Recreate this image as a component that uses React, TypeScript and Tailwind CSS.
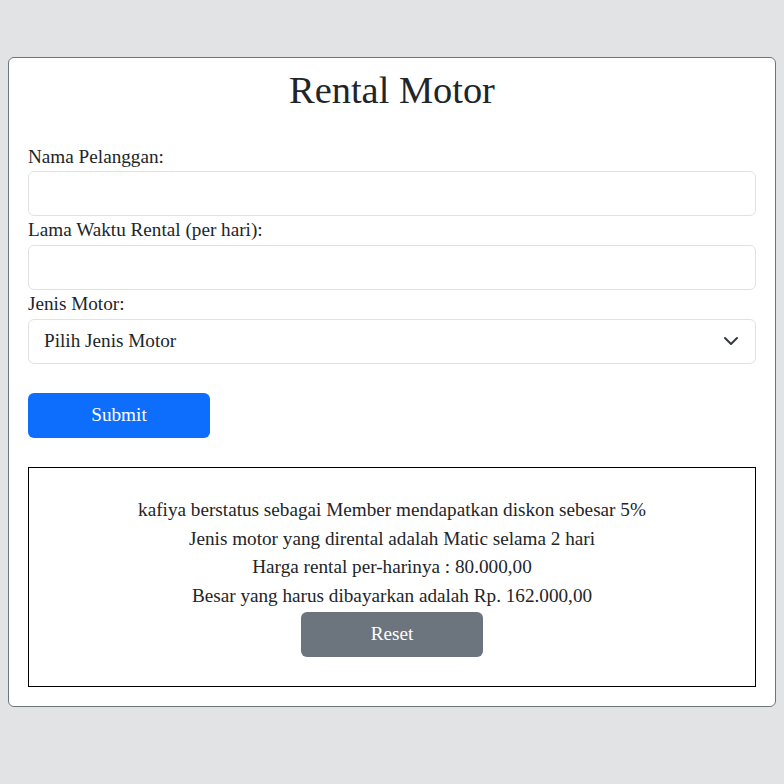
const serif = { fontFamily: '"Liberation Serif", "Times New Roman", serif' };

function Field({ label }: { label: string }) {
  return (
    <div>
      <label className="block text-[19.2px] leading-[28.8px] text-[#212529]">{label}</label>
      <input
        type="text"
        className="block h-[45px] w-full rounded-[6px] border border-[#dee2e6] bg-white px-4 text-[19.2px] outline-none"
      />
    </div>
  );
}

export default function App() {
  return (
    <div className="min-h-[784px] bg-[#e2e3e5] px-2 pt-[57px] pb-8" style={serif}>
      <div className="rounded-[6px] border border-[#6c757d] bg-white px-[19px] pt-[9px] pb-[19px]">
        <h1 className="text-center text-[38.4px] leading-[46px] text-[#212529]">Rental Motor</h1>

        <form className="mt-[29.5px]" onSubmit={(e) => e.preventDefault()}>
          <Field label="Nama Pelanggan:" />
          <Field label="Lama Waktu Rental (per hari):" />
          <div>
            <label className="block text-[19.2px] leading-[28.8px] text-[#212529]">Jenis Motor:</label>
            <div className="relative">
              <select
                className="block h-[45px] w-full appearance-none rounded-[6px] border border-[#dee2e6] bg-white pl-[15px] pr-10 text-[19.2px] text-[#212529] outline-none"
                style={serif}
                defaultValue=""
              >
                <option value="">Pilih Jenis Motor</option>
                <option value="matic">Matic</option>
                <option value="manual">Manual</option>
                <option value="sport">Sport</option>
              </select>
              <svg
                className="pointer-events-none absolute right-[17px] top-1/2 -translate-y-1/2"
                width="16"
                height="16"
                viewBox="0 0 16 16"
                fill="none"
                stroke="#343a40"
                strokeWidth="2"
                strokeLinecap="round"
                strokeLinejoin="round"
              >
                <path d="m2 5 6 6 6-6" />
              </svg>
            </div>
          </div>

          <button
            type="submit"
            className="mt-[29px] h-[45px] w-[182px] rounded-[6px] bg-[#0d6efd] text-[19.2px] text-white"
          >
            Submit
          </button>
        </form>

        <div className="mt-[29px] border border-black pt-[28px] pb-[29px] text-center text-[19.2px] leading-[28.8px] text-[#212529]">
          <p>kafiya berstatus sebagai Member mendapatkan diskon sebesar 5%</p>
          <p>Jenis motor yang dirental adalah Matic selama 2 hari</p>
          <p>Harga rental per-harinya : 80.000,00</p>
          <p>Besar yang harus dibayarkan adalah Rp. 162.000,00</p>
          <button
            type="button"
            className="mx-auto mt-[1px] block h-[45px] w-[182px] rounded-[6px] bg-[#6c757d] text-[19.2px] text-white"
          >
            Reset
          </button>
        </div>
      </div>
    </div>
  );
}
